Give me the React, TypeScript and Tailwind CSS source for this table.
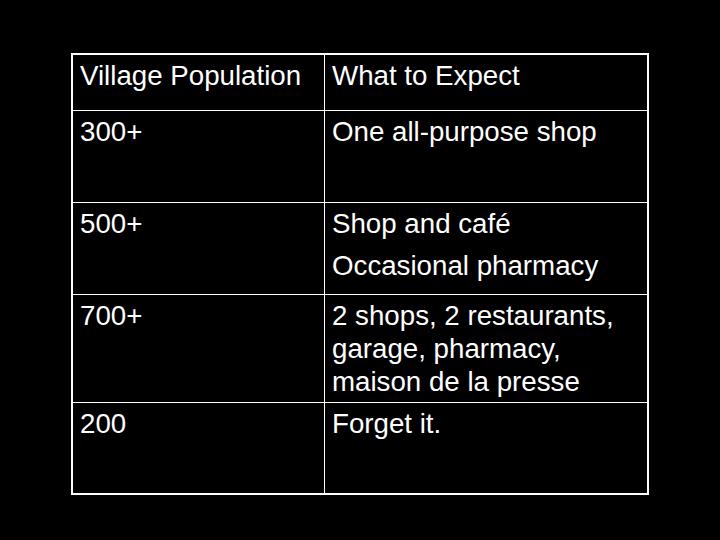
const rows: { left: string; right: string[]; gap?: boolean; h: string }[] = [
  { left: "300+", right: ["One all-purpose shop"], h: "h-[92px]" },
  {
    left: "500+",
    right: ["Shop and café", "Occasional pharmacy"],
    gap: true,
    h: "h-[92px]",
  },
  {
    left: "700+",
    right: ["2 shops, 2 restaurants,", "garage, pharmacy,", "maison de la presse"],
    h: "h-[108px]",
  },
  { left: "200", right: ["Forget it."], h: "h-[90px]" },
];

export default function App() {
  return (
    <div
      className="h-[540px] w-[720px] bg-black pl-[71px] pt-[53px] text-[27.7px] leading-[33px] text-white"
      style={{ fontFamily: '"Liberation Sans", Arial, sans-serif' }}
    >
      <div className="w-[578px] border-2 border-white">
        <div className="flex h-[56px] border-b border-white">
          <div className="w-[252px] shrink-0 border-r border-white pl-[7px] pt-1">
            Village Population
          </div>
          <div className="flex-1 pl-[7px] pt-1">What to Expect</div>
        </div>
        {rows.map((row, i) => (
          <div
            key={row.left}
            className={`flex ${row.h} ${i < rows.length - 1 ? "border-b border-white" : ""}`}
          >
            <div className="w-[252px] shrink-0 border-r border-white pl-[7px] pt-1">
              {row.left}
            </div>
            <div className="flex-1 pl-[7px] pt-1">
              {row.right.map((line, j) => (
                <div key={line} className={row.gap && j > 0 ? "mt-[9px]" : ""}>
                  {line}
                </div>
              ))}
            </div>
          </div>
        ))}
      </div>
    </div>
  );
}
